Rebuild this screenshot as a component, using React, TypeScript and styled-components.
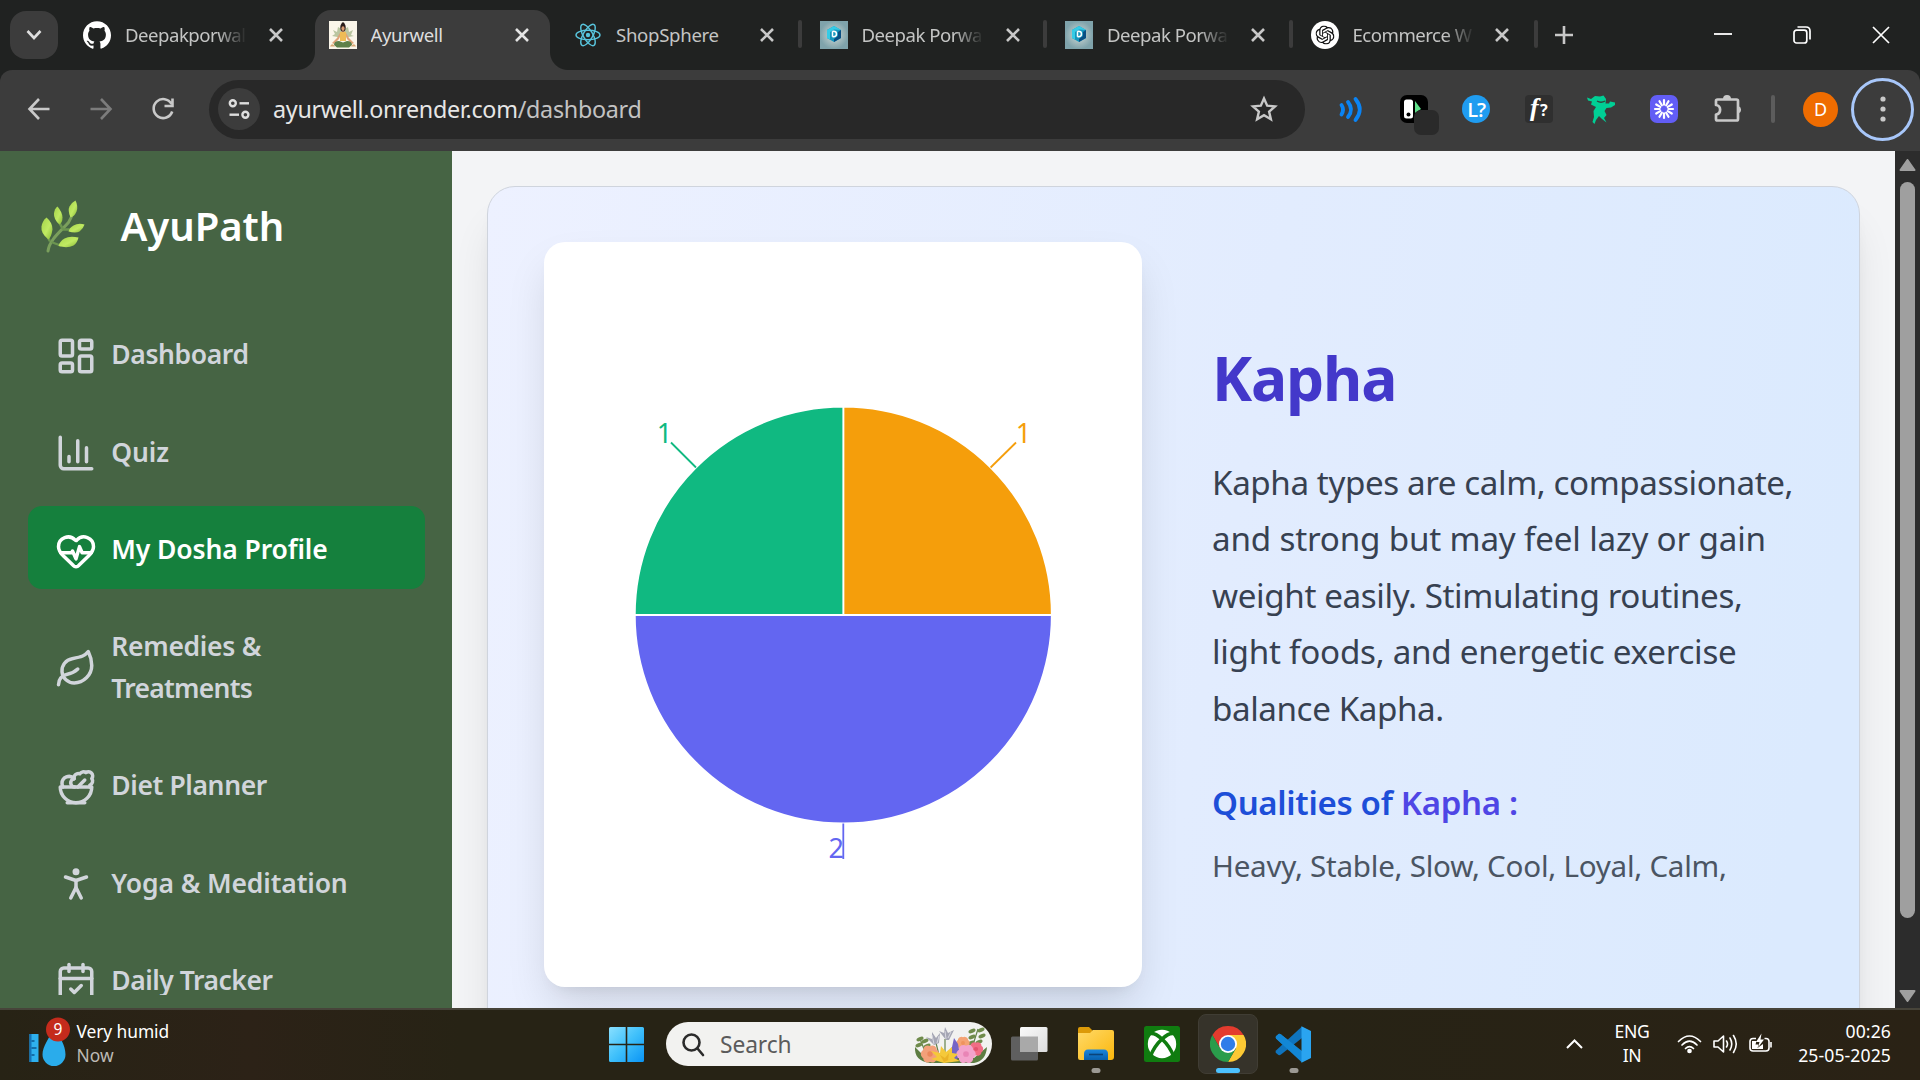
import React from "react";
import styled, { createGlobalStyle, css } from "styled-components";
import {
  Activity, LayoutDashboard, HeartPulse, Leaf, Salad, PersonStanding, CalendarCheck,
} from "lucide-react";
import { SiOpenai, SiGithub } from "react-icons/si";

const Global = createGlobalStyle`
  * { box-sizing: border-box; }
  html, body { margin: 0; padding: 0; overflow: hidden; background: #202221; }
  body { font-family: "Noto Sans", "Open Sans", sans-serif; }
  svg { display: block; flex: none; }
`;

const Screen = styled.div`
  width: 1920px;
  height: 1080px;
  display: flex;
  flex-direction: column;
  overflow: hidden;
`;

/* ---------- Tab strip ---------- */
const TabStrip = styled.div`
  height: 70px;
  flex: none;
  display: flex;
  align-items: flex-start;
  padding: 10px 0 0 10px;
  background: #202221;
`;
const TabSearch = styled.div`
  width: 48px;
  height: 48px;
  margin: 1px 11px 0 0;
  border-radius: 16px;
  background: #3c3c3c;
  display: grid;
  place-items: center;
`;
const Tab = styled.div<{ $active?: boolean }>`
  position: relative;
  width: 245.5px;
  height: 60px;
  flex: none;
  display: flex;
  align-items: center;
  padding: 0 24px 10px 14px;
  ${(p) =>
    p.$active &&
    css`
      &::before {
        content: "";
        position: absolute;
        inset: 0 10px 0 0;
        border-radius: 16px 16px 0 0;
        background: #3c3c3c;
      }
      & > svg { position: relative; }
    `}
`;
const Flare = styled.span<{ $side: "left" | "right" }>`
  position: absolute;
  bottom: 0;
  width: 18px;
  height: 18px;
  ${(p) => (p.$side === "left" ? "left: -18px;" : "right: -8px;")}
  background: radial-gradient(
    circle at ${(p) => (p.$side === "left" ? "0 0" : "100% 0")},
    transparent 17.5px,
    #3c3c3c 18.5px
  );
`;
const TabTitle = styled.span<{ $fade?: boolean; $active?: boolean; $track?: number }>`
  position: relative;
  width: 122px;
  flex: none;
  margin: 0 0 0 14px;
  overflow: hidden;
  white-space: nowrap;
  font-size: 18.6px;
  line-height: 30px;
  letter-spacing: ${(p) => p.$track ?? -0.5}px;
  color: ${(p) => (p.$active ? "#dedede" : "#c4c5c4")};
  ${(p) => p.$fade && "mask-image: linear-gradient(90deg, #000 92px, transparent 122px);"}
`;
const TabClose = styled.span`
  position: relative;
  margin-left: 22px;
  ${Tab}:nth-last-of-type(3) & { margin-left: 20px; }
`;
const TabDivider = styled.i`
  position: absolute;
  right: 4px;
  top: 10px;
  width: 4px;
  height: 28px;
  border-radius: 2px;
  background: #3c3c3c;
`;
const NewTab = styled.div`
  margin: 16px 0 0 13px;
`;
const WindowButtons = styled.div`
  margin-left: auto;
  display: flex;
  align-items: center;
  gap: 61px;
  height: 50px;
  padding-right: 30px;
`;

/* ---------- Toolbar ---------- */
const ToolbarBack = styled.div`
  flex: none;
  height: 81px;
  background: #202221;
`;
const Toolbar = styled.div`
  height: 81px;
  display: flex;
  align-items: center;
  padding: 0 6px 3px 25px;
  border-radius: 12px 12px 0 0;
  background: #3c3c3c;
`;
const NavButtons = styled.div`
  display: flex;
  gap: 34px;
  width: 184px;
`;
const Omnibox = styled.div`
  width: 1096px;
  height: 59px;
  border-radius: 30px;
  background: #282828;
  display: flex;
  align-items: center;
  padding: 0 27.5px 0 9px;
`;
const SiteInfo = styled.div`
  width: 42px;
  height: 42px;
  border-radius: 50%;
  background: #3c3c3c;
  display: grid;
  place-items: center;
`;
const Url = styled.div`
  flex: 1;
  margin-left: 13px;
  font-size: 23.3px;
  letter-spacing: -0.28px;
  line-height: 34px;
  color: #e6e6e6;
  span { color: #c3c3c3; }
`;
const Extensions = styled.div`
  display: flex;
  align-items: center;
  gap: 30.6px;
  margin-left: 30px;
`;
const ExtBox = styled.div<{ $bg?: string; $round?: string }>`
  position: relative;
  width: 32px;
  height: 32px;
  display: grid;
  place-items: center;
  & > div {
    width: 28px;
    height: 28px;
    display: grid;
    place-items: center;
    border-radius: ${(p) => p.$round ?? "7px"};
    background: ${(p) => p.$bg ?? "transparent"};
    color: #fff;
    line-height: 28px;
  }
`;
const LMark = styled.b`
  font: 600 20px/27px "Open Sans", sans-serif;
  letter-spacing: -1px;
`;
const FMark = styled.b`
  font: italic 700 26px/24px "Liberation Serif", serif;
  letter-spacing: 1.5px;
  span { font: 700 16px/24px "Noto Sans", sans-serif; letter-spacing: 0; }
`;
const ExtBadge = styled.i`
  position: absolute;
  left: 16px;
  top: 17px;
  width: 25px;
  height: 25px;
  border-radius: 7px;
  background: #2a2a2a;
`;
const ToolbarDivider = styled.i`
  width: 4px;
  height: 28px;
  border-radius: 2px;
  background: #5c5c5c;
  margin: 0 28px 0 28.5px;
`;
const Avatar = styled.div`
  width: 35px;
  height: 35px;
  border-radius: 50%;
  background: #ef6c00;
  color: #fff;
  font-size: 18px;
  line-height: 35px;
  text-align: center;
`;
const MenuRing = styled.div`
  width: 63px;
  height: 63px;
  border-radius: 50%;
  border: 3px solid #a8c7fa;
  margin-left: auto;
  display: grid;
  place-items: center;
`;

/* ---------- Web page ---------- */
const Viewport = styled.div`
  height: 857px;
  flex: none;
  display: flex;
  overflow: hidden;
  background: #f3f4f6;
`;
const Sidebar = styled.aside`
  width: 452px;
  height: 844px;
  flex: none;
  overflow: hidden;
  padding: 0 27px 0 28px;
`;
const SidebarBack = styled.div`
  width: 452px;
  height: 857px;
  flex: none;
  background: #466444;
`;
const Brand = styled.div`
  display: flex;
  align-items: center;
  height: 154px;
  padding: 0 0 5px 8px;
  gap: 28.5px;
`;
const BrandName = styled.div`
  font-size: 40px;
  font-weight: 600;
  line-height: 56px;
  letter-spacing: -0.05px;
  color: #fff;
`;
const Nav = styled.nav`
  display: flex;
  flex-direction: column;
  gap: 14.2px;
  margin-top: 6px;
`;
const NavItem = styled.div<{ $active?: boolean }>`
  display: flex;
  align-items: center;
  gap: 14px;
  min-height: 83.2px;
  padding: 20px 27px 20px 27.3px;
  border-radius: 14px;
  background: ${(p) => (p.$active ? "#15803d" : "transparent")};
  color: ${(p) => (p.$active ? "#fff" : "#d1d5db")};
  svg { position: relative; top: 3.5px; }
`;
const NavLabel = styled.span`
  font-size: 26.5px;
  font-weight: 600;
  line-height: 42.3px;
  padding-top: 2px;
  margin-bottom: -2px;
`;
const Main = styled.main`
  flex: 1;
  padding: 35px 35px 0 35px;
  overflow: hidden;
`;
const ProfileCard = styled.section`
  height: 1000px;
  border: 1px solid #cfd4dd;
  border-radius: 28px;
  background: linear-gradient(100deg, #edf1ff 0%, #e2ecfe 52%, #dbeafe 92%);
  box-shadow: 0 35px 44px -9px rgba(0, 0, 0, 0.12), 0 14px 18px -10px rgba(0, 0, 0, 0.1);
  padding: 55px 55px 55px 56px;
  display: flex;
  gap: 70px;
`;
const ChartPanel = styled.div`
  width: 598px;
  height: 745px;
  flex: none;
  border-radius: 21px;
  background: #fff;
  box-shadow: 0 22px 44px -6px rgba(0, 0, 0, 0.13), 0 9px 16px -10px rgba(0, 0, 0, 0.1);
`;
const SliceLabel = styled.text`
  font-size: 27px;
  text-anchor: middle;
`;
const Copy = styled.div`
  padding-top: 91px;
  white-space: nowrap;
`;
const DoshaName = styled.h1`
  margin: 0;
  font-size: 60.5px;
  font-weight: 700;
  line-height: 90px;
  letter-spacing: -1.2px;
  color: #4338ca;
`;
const Description = styled.p`
  margin: 31.6px 0 0;
  font-size: 33.2px;
  line-height: 56.6px;
  color: #374151;
`;
const Line = styled.span<{ $track?: number }>`
  display: block;
  letter-spacing: ${(p) => p.$track ?? 0}px;
`;
const QualitiesTitle = styled.h2`
  margin: 40.4px 0 0;
  font-size: 33px;
  font-weight: 600;
  line-height: 50px;
  letter-spacing: -0.33px;
  color: #1d4ed8;
  span { color: #4f46e5; }
`;
const QualitiesText = styled.p`
  margin: 13px 0 0;
  font-size: 29.6px;
  line-height: 50px;
  letter-spacing: -0.25px;
  color: #4b5563;
`;
const Scrollbar = styled.div`
  width: 25px;
  background: #2c2c2c;
  display: flex;
  flex-direction: column;
  align-items: center;
  padding: 8px 0 6px;
`;
const Thumb = styled.div`
  width: 15px;
  height: 736px;
  margin: 11px 0 auto;
  border-radius: 8px;
  background: #9f9f9f;
`;

/* ---------- Taskbar ---------- */
const Taskbar = styled.footer`
  flex: 1;
  display: flex;
  align-items: center;
  padding-bottom: 2px;
  border-top: 2px solid #47443a;
  background: linear-gradient(90deg, #272315 0, #2c2217 250px, #272315 460px, #272315 1300px, #2a2215);
  color: #fff;
`;
const Weather = styled.div`
  display: flex;
  width: 609px;
  padding-left: 28.5px;
  align-items: center;
  gap: 7px;
`;
const WeatherText = styled.div`
  font-size: 17.4px;
  line-height: 24px;
  letter-spacing: -0.08px;
  padding-bottom: 3px;
  span { display: block; color: #bdbab4; letter-spacing: 0; }
`;
const SearchBox = styled.div`
  width: 326px;
  height: 44px;
  margin-left: 22px;
  border-radius: 22px;
  background: #f2f2f0;
  color: #5b5b5b;
  display: flex;
  align-items: center;
  padding: 1px 4px 0 15px;
  font-size: 22.8px;
  line-height: 34px;
  letter-spacing: -0.1px;
  gap: 15px;
  svg:last-child { margin-left: auto; }
`;
const Apps = styled.div`
  display: flex;
  margin-left: 7.5px;
  gap: 6px;
`;
const TaskApp = styled.div<{ $open?: boolean; $focus?: boolean }>`
  position: relative;
  width: 60px;
  height: 60px;
  border-radius: 8px;
  display: grid;
  place-items: center;
  ${(p) => p.$focus && "background: #36332a; border: 1px solid #403d34;"}
  ${(p) =>
    (p.$open || p.$focus) &&
    css`
      &::after {
        content: "";
        position: absolute;
        bottom: ${p.$focus ? 0 : 1}px;
        left: 50%;
        transform: translateX(-50%);
        width: ${p.$focus ? 24 : 9}px;
        height: 5px;
        border-radius: 3px;
        background: ${p.$focus ? "#4cc2ff" : "#9b9993"};
      }
    `}
`;
const Tray = styled.div`
  margin-left: auto;
  display: flex;
  align-items: center;
  padding-right: 29px;
`;
const TrayText = styled.div<{ $align: string; $w: number }>`
  width: ${(p) => p.$w}px;
  padding-bottom: 1px;
  ${(p) => p.$align === "center" && "padding-left: 4px;"}
  text-align: ${(p) => p.$align};
  font-size: 17.6px;
  line-height: 23.4px;
  letter-spacing: ${(p) => (p.$align === "center" ? -0.3 : 0.1)}px;
  white-space: nowrap;
`;
const TrayIcons = styled.div`
  display: flex;
  gap: 11px;
  margin-right: 24px;
`;

/* ---------- Drawings ---------- */
const Cross = ({ s = 14, w = 2.6, c = "#c8c8c8" }: { s?: number; w?: number; c?: string }) => (
  <svg width={s} height={s} viewBox={`0 0 ${s} ${s}`}>
    <path d={`M1 1L${s - 1} ${s - 1}M${s - 1} 1L1 ${s - 1}`} stroke={c} strokeWidth={w} />
  </svg>
);

const YogaIcon = () => (
  <svg width="28" height="28" viewBox="0 0 28 28">
    <rect width="28" height="28" fill="#fbf6ea" />
    <path d="M14 17L3 15L6 13L4 9L8 11L9 6L14 9L19 6L20 11L24 9L22 14L25 15Z" fill="#b9c5a0" />
    <path d="M11.500 11Q14 9 16.500 11L20 17L25 22L23 23L18 18L17 15V20H11V15L10 18L5 23L3 22L8 17Z" fill="#dfa277" />
    <path d="M11 11H17V20H11Z" fill="#eebb55" />
    <ellipse cx="14" cy="6.500" rx="2.700" ry="4" fill="#2a1c1a" />
    <circle cx="14" cy="2.800" r="1.500" fill="#2a1c1a" />
    <ellipse cx="14" cy="7.600" rx="1.600" ry="2.300" fill="#dc9d72" />
    <path d="M5 24Q5 20 10 20L14 21.500L18 20Q23 20 23 24L20 26.500H8Z" fill="#5f8049" />
    <path d="M1 25.500Q3 21 6 25.500ZM22 25.500Q25 21 27 25.500Z" fill="#d9a773" />
  </svg>
);
const ReactIcon = () => (
  <svg width="28" height="28" viewBox="-14 -14 28 28" fill="none" stroke="#58c4dc" strokeWidth="1.400">
    <ellipse rx="12" ry="4.700" />
    <ellipse rx="12" ry="4.700" transform="rotate(60)" />
    <ellipse rx="12" ry="4.700" transform="rotate(120)" />
    <circle r="2.200" fill="#58c4dc" stroke="none" />
  </svg>
);
const HexIcon = () => (
  <svg width="28" height="28" viewBox="0 0 28 28">
    <defs>
      <radialGradient id="hexbg"><stop offset="0" stopColor="#d2dad6" /><stop offset="1" stopColor="#7fa3ab" /></radialGradient>
    </defs>
    <rect width="28" height="28" fill="url(#hexbg)" />
    <path d="M14 5L21 9V17L14 21L7 17V9Z" fill="#1496bd" />
    <path d="M14 5L7 9V17L10 18.500V11L14 8.500L21 9Z" fill="#35cbe6" />
    <path d="M21 9V17L14 21V18L18 15V11Z" fill="#0a4f83" />
    <path d="M12.500 10.300V15.700M12.500 10.300H13.500Q16.500 10.300 16.500 13Q16.500 15.700 13.500 15.700H12.500" fill="none" stroke="#fff" strokeWidth="1.500" />
    <ellipse cx="14" cy="23.500" rx="3" ry=".7" fill="#9ab3b5" />
  </svg>
);
const OpenAiIcon = () => (
  <svg width="28" height="28" viewBox="0 0 28 28">
    <circle cx="14" cy="14" r="14" fill="#fff" />
    <SiOpenai x="4.5" y="4.5" size={19} color="#111" />
  </svg>
);
const TuneIcon = () => (
  <svg width="24" height="24" viewBox="0 0 24 24" fill="none" stroke="#dedede" strokeWidth="2.400">
    <circle cx="5.800" cy="6.300" r="3" /><path d="M12.500 6.300H22" />
    <circle cx="18.400" cy="17.700" r="3" /><path d="M2.500 17.700H12" />
  </svg>
);
const Sprig = () => (
  <svg width="56" height="56" viewBox="0.500 0.500 56 56">
    <defs>
      <linearGradient id="leafg" x1="0" y1="0" x2="1" y2="1"><stop offset="0" stopColor="#a4d44a" /><stop offset=".55" stopColor="#c0ea62" /><stop offset="1" stopColor="#86b637" /></linearGradient>
    </defs>
    <g fill="none" stroke="#6c9550" strokeWidth="2.400" strokeLinecap="round">
      <path d="M12.500 53.500C14 42 26 33 33 25Q36 20 37 16" stroke="#7a9f5c" strokeWidth="3" />
      <path d="M14 43Q12 40 12 38M27 31Q25 27 23 24M28 32H36M17 45L25 48" />
    </g>
    <g fill="url(#leafg)">
      <path d="M11 20Q17 25 17 32Q16 39 13 42Q5 36 6 29Q7 23 11 20Z" />
      <path d="M22 9Q27 15 27 20Q27 25 24 27Q18 22 18.500 16Q19 11 22 9Z" />
      <path d="M40 3Q43 9 41 14Q39 19 35 20Q32 13 34 9Q36 5 40 3Z" />
      <path d="M49 27Q43 25 38 28Q34 30 33 34Q40 36 44 34Q48 31 49 27Z" />
      <path d="M43 40Q34 38 29 41Q24 44 23 48.500Q32 51 38 48Q42 45 43 40Z" />
    </g>
  </svg>
);

const Swoosh = () => (
  <svg width="32" height="32" viewBox="0 0 32 32" fill="none" stroke="#0a84f5" strokeWidth="3.800" strokeLinecap="round">
    <path d="M6.500 12Q9.500 16.500 6.500 21.500M13 9Q19 16.500 13 24M20.500 6Q29 16.500 20.500 27" />
  </svg>
);
const Wombat = () => (
  <svg width="32" height="32" viewBox="0 0 32 32" fill="#00cf95">
    <path d="M2 4.500L6 6L10 3L15 3.500L18.500 2.500L21 6L20.500 10.500L24 10.500L25 8.500L30 9.500V12L26 14.500L21.500 15L19.500 18L21.500 22L19 25L21.500 29.500L17 26L14 23L11 27L9.500 31L7.500 29L9 24L8.500 18L11 14L6 11.500L7 8.500L3 7.500Z" />
    <path d="M12 8Q16 10.500 20 8" stroke="#30463c" strokeWidth="1.300" fill="none" />
  </svg>
);
const Burst = () => (
  <svg width="22" height="22" viewBox="-11 -11 22 22" stroke="#fff" strokeWidth="2.200" strokeLinecap="round">
    {Array.from({ length: 12 }, (_, i) => (
      <path key={i} d="M0 -4.300V-9" transform={`rotate(${i * 30})`} />
    ))}
  </svg>
);
const Puzzle = () => (
  <svg width="32" height="32" viewBox="0 0 32 32" fill="none" stroke="#c9c9c9" strokeWidth="2.700" strokeLinejoin="round">
    <path d="M5 12V8Q5 6.500 6.500 6.500H25.500Q27 6.500 27 8V26Q27 27.500 25.500 27.500H6.500Q5 27.500 5 26V21.500A4.800 4.800 0 0 0 5 12Z" />
    <path d="M12 6A4 4 0 0 1 20 6ZM27.500 13A4 4 0 0 1 27.500 20.500Z" fill="#c9c9c9" stroke="none" />
  </svg>
);

const Pie = () => (
  <svg width="598" height="745" viewBox="0 0 598 745">
    <g stroke="#fff" strokeWidth="1.800">
      <path d="M299.300 373V164.500A208.500 208.500 0 0 1 507.800 373Z" fill="#f59e0b" />
      <path d="M299.300 373H90.800A208.500 208.500 0 0 1 299.300 164.500Z" fill="#10b981" />
      <path d="M299.300 373H507.800A208.500 208.500 0 0 1 90.800 373Z" fill="#6366f1" />
    </g>
    <g fill="none" strokeWidth="1.800">
      <path d="M152 225.500L127 200.500" stroke="#10b981" />
      <path d="M446.600 225.500L472 200.500" stroke="#f59e0b" />
      <path d="M299.300 581.500V617" stroke="#6366f1" />
    </g>
    <SliceLabel x="120.500" y="201" fill="#10b981">1</SliceLabel>
    <SliceLabel x="479.500" y="201" fill="#f59e0b">1</SliceLabel>
    <SliceLabel x="292.300" y="616" fill="#6366f1">2</SliceLabel>
  </svg>
);

const WeatherIcon = () => (
  <svg width="41" height="56" viewBox="0.500 0.500 41 56">
    <rect x="1" y="18.500" width="9" height="28" fill="#2eb0ee" />
    <rect x="1" y="18.500" width="2" height="28" fill="#1473b8" />
    <path d="M3 25.500H6M3 32.500H8M3 39.500H6" stroke="#0c5793" strokeWidth="1.600" />
    <path d="M26 12C31 22 37 29 37 39A11.500 11.500 0 0 1 14 39C14 31 21 22 26 12Z" fill="#2aaceb" />
    <circle cx="29.500" cy="14" r="12" fill="#c42b1c" />
    <text x="29.500" y="19.500" fontSize="15.500" textAnchor="middle" fill="#fff">9</text>
  </svg>
);
const WindowsLogo = () => (
  <svg width="35" height="35" viewBox="0 0 35 35">
    <defs><linearGradient id="win" x1="0" y1="0" x2="1" y2="1"><stop offset="0" stopColor="#8ae0ff" /><stop offset=".5" stopColor="#3fc0fb" /><stop offset="1" stopColor="#0a94f5" /></linearGradient></defs>
    <path d="M1.500 0H16.700V16.700H0V1.500Q0 0 1.500 0ZM18.300 0H33.500Q35 0 35 1.500V16.700H18.300ZM0 18.300H16.700V35H1.500Q0 35 0 33.500ZM18.300 18.300H35V33.500Q35 35 33.500 35H18.300Z" fill="url(#win)" />
  </svg>
);
const Lens = () => (
  <svg width="24" height="24" viewBox="0 0 24 24" fill="none" stroke="#2b2b2b" strokeWidth="2.600" strokeLinecap="round">
    <circle cx="10.500" cy="9.500" r="8" /><path d="M16.500 15.500L22 22" />
  </svg>
);
const Bloom = ({ x, y, r, c, d }: { x: number; y: number; r: number; c: string; d: string }) => (
  <g transform={`translate(${x} ${y})`}>
    {[0, 60, 120, 180, 240, 300].map((a) => (
      <ellipse key={a} cx={r * 0.5} rx={r * 0.52} ry={r * 0.5} fill={c} transform={`rotate(${a})`} />
    ))}
    <circle r={r * 0.3} fill={d} opacity=".5" />
  </g>
);
const Flowers = () => (
  <svg width="74" height="40" viewBox="0 0 74 40">
    <g stroke="#64834c" strokeWidth="1.200" fill="none">
      <path d="M14 34L6 14M57 26L64 4M26 34L22 18M31 34V14" />
    </g>
    <g fill="#6f8b4b">
      {[[6, 14], [11, 16], [5, 20], [13, 21], [58, 6], [67, 5], [58, 12], [68, 11], [57, 18], [65, 17]].map(([x, y]) => (
        <ellipse key={`${x}-${y}`} cx={x} cy={y} rx="3.800" ry="1.800" transform={`rotate(-25 ${x} ${y})`} />
      ))}
    </g>
    <path d="M1 22Q0 36 16 38H60Q72 36 73 22L60 33H12Z" fill="#5d7d42" />
    <path d="M20 20L12 12L18 14L18 7L22 13L26 8L25 18ZM32 15L25 6L30 8L31 2L34 8L40 5L35 15Z" fill="#a5a6b4" />
    <path d="M20 19L18 10M32 14L31 6M23 18L25 11M34 13L37 7" stroke="#d9d9e2" strokeWidth="1" />
    <Bloom x={49} y={18} r={6.5} c="#f5a374" d="#ea8348" />
    <Bloom x={62} y={24} r={7} c="#f26d85" d="#d63a59" />
    <path d="M40 13L44 19L46 30L42 35L37 31L35 26L38 22Z" fill="#7565c6" />
    <Bloom x={16} y={29} r={9} c="#f3a07a" d="#e4703f" />
    <Bloom x={52} y={29} r={9.5} c="#f3a3cc" d="#e0679f" />
    <path d="M30 38L17 34L23 32L17 26L26 28L27 21L32 27L38 22L38 28L44 29L40 33L46 36Z" fill="#f5c93a" />
    <path d="M30 37L26 30L31 33L35 28L34 35L39 33Z" fill="#e09d16" opacity=".5" />
  </svg>
);
const TaskView = () => (
  <svg width="37" height="36" viewBox="0 0 37 36">
    <defs><linearGradient id="tv" x1="0" y1="0" x2="1" y2="1"><stop offset="0" stopColor="#fafafa" /><stop offset="1" stopColor="#dcdcdc" /></linearGradient></defs>
    <rect x="0" y="10.500" width="27" height="24" rx="1.500" fill="#5f5f5f" />
    <rect x="9" y="1" width="27.500" height="25" rx="1.500" fill="url(#tv)" />
    <rect x="9" y="10.500" width="18" height="15.500" fill="#a9a9a9" />
  </svg>
);
const Folder = () => (
  <svg width="36" height="36" viewBox="0 0 36 36">
    <defs>
      <linearGradient id="fold" x1="0" y1="0" x2="1" y2="1"><stop offset="0" stopColor="#ffd968" /><stop offset="1" stopColor="#fbb70c" /></linearGradient>
      <linearGradient id="tray" x1="0" y1="0" x2="0" y2="1"><stop offset="0" stopColor="#1a86dd" /><stop offset="1" stopColor="#0860ad" /></linearGradient>
    </defs>
    <path d="M0 3Q0 1 2 1H11L15 5V12H0Z" fill="#dc9a08" />
    <path d="M0 7H12L15 4H34Q36 4 36 6V31Q36 34 33 34H2Q0 34 0 32Z" fill="url(#fold)" />
    <path d="M6 34V28Q6 23.500 10 23.500H26Q30 23.500 30 28V34Z" fill="url(#tray)" />
    <path d="M11 28.500H25" stroke="#0a4379" strokeWidth="1.600" />
  </svg>
);
const Xbox = () => (
  <svg width="36" height="36" viewBox="0 0 36 36">
    <rect width="36" height="36" rx="2.500" fill="#107c10" />
    <circle cx="18" cy="18" r="14.200" fill="#fff" />
    <g fill="none" stroke="#107c10" strokeWidth="3.600">
      <path d="M6 7.500Q11 6.500 18 13Q26.500 21 29.500 30.500" />
      <path d="M30 7.500Q25 6.500 18 13Q9.500 21 6.500 30.500" />
    </g>
  </svg>
);
const Chrome = () => (
  <svg width="36" height="36" viewBox="-18 -18 36 36">
    <path d="M-15.590 -9A18 18 0 0 1 15.590 -9H0L-7.800 4.500Z" fill="#e33b2e" />
    <path d="M15.590 -9A18 18 0 0 1 0 18L7.800 4.500L0 -9Z" fill="#fcc934" />
    <path d="M0 18A18 18 0 0 1 -15.590 -9L-7.800 4.500L0 9L7.800 4.500Z" fill="#2a9c4b" />
    <circle r="9" fill="#fff" /><circle r="7.200" fill="#2f7de9" />
  </svg>
);
const VsCode = () => (
  <svg width="37" height="37" viewBox="0 0 37 37">
    <path d="M27 36.500L1 12.500Q0 11 1 10L3.500 8Q4.500 7.500 6 8.500L27 25Z" fill="#1287d6" />
    <path d="M27 0.500L1 24.500Q0 26 1 27L3.500 29Q4.500 29.500 6 28.500L27 12Z" fill="#0f74be" />
    <path d="M1 12.500L3.500 8Q4.500 7.500 6 8.500L20 19.500L14 24.500Z" fill="#1287d6" />
    <path d="M26.500 .3L36 5V32L26.500 36.700Z" fill="#2aa4f0" />
  </svg>
);
const Wifi = () => (
  <svg width="25" height="22" viewBox="0 0 25 22" fill="none" stroke="#fff" strokeWidth="1.700" strokeLinecap="round">
    <path d="M1.500 8.500Q12.500 -2.500 23.500 8.500M5 12Q12.500 4.500 20 12M8.500 15.500Q12.500 11.500 16.500 15.500" />
    <circle cx="12.500" cy="18" r="1.500" fill="#fff" />
  </svg>
);
const Speaker = () => (
  <svg width="25" height="22" viewBox="0 0 25 22" fill="none" stroke="#fff" strokeWidth="1.600" strokeLinecap="round" strokeLinejoin="round">
    <path d="M1 8H5L10.500 3V19L5 14H1ZM13.500 8Q15.500 11 13.500 14M17 5Q20.500 11 17 17M20.500 2.500Q26 11 20.500 19.500" />
  </svg>
);
const Battery = () => (
  <svg width="24" height="22" viewBox="0 0 24 22" fill="none" stroke="#fff" strokeWidth="1.600">
    <path d="M7 5.500H4Q1 5.500 1 8.500V15Q1 18 4 18H17Q20 18 20 15V8.500Q20 5.500 17 5.500H15.500M22 9V14.500" />
    <path d="M3 8H7.500L6.500 11.500H9.500L8.500 15L14 11V16H3Z" fill="#fff" stroke="none" />
    <path d="M12.500 .500L7 9H10.500L9 14.500L15 6.500H11.500Z" fill="#fff" stroke="none" />
  </svg>
);
const QuizIcon = () => (
  <svg width="42" height="42" viewBox="0 0 24 24" fill="none" stroke="currentColor" strokeWidth="2" strokeLinecap="round" strokeLinejoin="round">
    <path d="M3 3v16a2 2 0 0 0 2 2h16M18 17V9M13 17V5M8 17v-3" />
  </svg>
);

const tabs = [
  { icon: <SiGithub size={28} color="#fff" />, title: "Deepakporwal", fade: true },
  { icon: <YogaIcon />, title: "Ayurwell", active: true, track: -0.4 },
  { icon: <ReactIcon />, title: "ShopSphere", divider: true, track: -0.3 },
  { icon: <HexIcon />, title: "Deepak Porwal", fade: true, divider: true },
  { icon: <HexIcon />, title: "Deepak Porwal", fade: true, divider: true },
  { icon: <OpenAiIcon />, title: "Ecommerce W", fade: true, divider: true },
];

const navItems: { Icon?: typeof Activity; lines: [string, number][]; active?: boolean }[] = [
  { Icon: LayoutDashboard, lines: [["Dashboard", -0.4]] },
  { lines: [["Quiz", -0.1]] },
  { Icon: HeartPulse, lines: [["My Dosha Profile", -0.11]], active: true },
  { Icon: Leaf, lines: [["Remedies &", -0.3], ["Treatments", -0.75]] },
  { Icon: Salad, lines: [["Diet Planner", -0.38]] },
  { Icon: PersonStanding, lines: [["Yoga & Meditation", -0.13]] },
  { Icon: CalendarCheck, lines: [["Daily Tracker", -0.48]] },
];

const description: [string, number][] = [
  ["Kapha types are calm, compassionate,", -0.41],
  ["and strong but may feel lazy or gain", -0.18],
  ["weight easily. Stimulating routines,", -0.38],
  ["light foods, and energetic exercise", -0.26],
  ["balance Kapha.", -0.42],
];

export default function App() {
  return (
    <Screen>
      <Global />
      <TabStrip>
        <TabSearch>
          <svg width="16" height="12" viewBox="0 0 16 12" fill="none" stroke="#dedede" strokeWidth="2.600">
            <path d="M1.500 2L8 9L14.500 2" />
          </svg>
        </TabSearch>
        {tabs.map((t, i) => (
          <Tab key={i} $active={t.active}>
            {t.active && <><Flare $side="left" /><Flare $side="right" /></>}
            {t.icon}
            <TabTitle $fade={t.fade} $active={t.active} $track={t.track}>{t.title}</TabTitle>
            <TabClose><Cross c={t.active ? "#e3e3e3" : "#c8c8c8"} /></TabClose>
            {t.divider && <TabDivider />}
          </Tab>
        ))}
        <NewTab>
          <svg width="18" height="18" viewBox="0 0 18 18"><path d="M9 0V18M0 9H18" stroke="#c8c8c8" strokeWidth="2.600" /></svg>
        </NewTab>
        <WindowButtons>
          <svg width="18" height="18" viewBox="0 0 18 18"><path d="M0 8H18" stroke="#fff" strokeWidth="1.800" /></svg>
          <svg width="18" height="18" viewBox="0 0 18 18" fill="none" stroke="#fff" strokeWidth="1.700">
            <rect x="1" y="4.200" width="12.800" height="12.800" rx="2.500" />
            <path d="M4.500 1H13Q17 1 17 5V13.500" />
          </svg>
          <Cross s={18} w={1.7} c="#fff" />
        </WindowButtons>
      </TabStrip>

      <ToolbarBack>
        <Toolbar>
          <NavButtons>
            <svg width="28" height="28" viewBox="0 0 28 28" fill="none" stroke="#c9c9c9" strokeWidth="2.600"><path d="M24.500 14H5M14 4L4.500 14L14 24" /></svg>
            <svg width="28" height="28" viewBox="0 0 28 28" fill="none" stroke="#7c7c7c" strokeWidth="2.600"><path d="M3.500 14H23M14 4L23.500 14L14 24" /></svg>
            <svg width="28" height="28" viewBox="0 0 28 28" fill="none" stroke="#c9c9c9" strokeWidth="2.600">
              <path d="M22.500 9A9.500 9.500 0 1 0 23.200 16.500M23.500 3.500V11H15.500" />
            </svg>
          </NavButtons>
          <Omnibox>
            <SiteInfo><TuneIcon /></SiteInfo>
            <Url>ayurwell.onrender.com<span>/dashboard</span></Url>
            <svg width="28" height="28" viewBox="0 0 28 28" fill="none" stroke="#c9c9c9" strokeWidth="2.400">
              <path d="M14 3.500L17.200 10.700L25 11.400L19.100 16.600L20.900 24.300L14 20.200L7.100 24.300L8.900 16.600L3 11.400L10.800 10.700Z" />
            </svg>
          </Omnibox>
          <Extensions>
            <Swoosh />
            <ExtBox $bg="#000">
              <div>
                <svg width="28" height="28" viewBox="0 0 28 28">
                  <rect x="4" y="4.500" width="9" height="19" rx="2.500" fill="#fff" />
                  <circle cx="8.500" cy="19.500" r="2" fill="#000" />
                  <path d="M15 6L21 14L15 18Z" fill="#5fe08a" />
                </svg>
              </div>
              <ExtBadge />
            </ExtBox>
            <ExtBox $bg="#1f9cf0" $round="50%"><div><LMark>L?</LMark></div></ExtBox>
            <ExtBox $bg="#2f2f2f" $round="4px"><div><FMark>f<span>?</span></FMark></div></ExtBox>
            <Wombat />
            <ExtBox $bg="#625df5"><div><Burst /></div></ExtBox>
            <Puzzle />
          </Extensions>
          <ToolbarDivider />
          <Avatar>D</Avatar>
          <MenuRing>
            <svg width="6" height="30" viewBox="0 0 6 30" fill="#c9c9c9"><circle cx="3" cy="5" r="2.600" /><circle cx="3" cy="15" r="2.600" /><circle cx="3" cy="25" r="2.600" /></svg>
          </MenuRing>
        </Toolbar>
      </ToolbarBack>

      <Viewport>
        <SidebarBack>
          <Sidebar>
            <Brand>
              <Sprig />
              <BrandName>AyuPath</BrandName>
            </Brand>
            <Nav>
              {navItems.map(({ Icon, lines, active }) => (
                <NavItem key={lines[0][0]} $active={active}>
                  {Icon ? <Icon size={42} strokeWidth={2} /> : <QuizIcon />}
                  <NavLabel>
                    {lines.map(([text, track]) => <Line key={text} $track={track}>{text}</Line>)}
                  </NavLabel>
                </NavItem>
              ))}
            </Nav>
          </Sidebar>
        </SidebarBack>
        <Main>
          <ProfileCard>
            <ChartPanel><Pie /></ChartPanel>
            <Copy>
              <DoshaName>Kapha</DoshaName>
              <Description>
                {description.map(([text, track]) => <Line key={text} $track={track}>{text}</Line>)}
              </Description>
              <QualitiesTitle>Qualities of <span>Kapha :</span></QualitiesTitle>
              <QualitiesText>Heavy, Stable, Slow, Cool, Loyal, Calm,</QualitiesText>
            </Copy>
          </ProfileCard>
        </Main>
        <Scrollbar>
          <svg width="17" height="12" viewBox="0 0 17 12"><path d="M8.500 1L15.500 11H1.500Z" fill="#9f9f9f" stroke="#9f9f9f" strokeWidth="2" strokeLinejoin="round" /></svg>
          <Thumb />
          <svg width="17" height="12" viewBox="0 0 17 12"><path d="M8.500 11L15.500 1H1.500Z" fill="#9f9f9f" stroke="#9f9f9f" strokeWidth="2" strokeLinejoin="round" /></svg>
        </Scrollbar>
      </Viewport>

      <Taskbar>
        <Weather>
          <WeatherIcon />
          <WeatherText>Very humid<span>Now</span></WeatherText>
        </Weather>
        <WindowsLogo />
        <SearchBox><Lens />Search<Flowers /></SearchBox>
        <Apps>
          <TaskApp><TaskView /></TaskApp>
          <TaskApp $open><Folder /></TaskApp>
          <TaskApp><Xbox /></TaskApp>
          <TaskApp $focus><Chrome /></TaskApp>
          <TaskApp $open><VsCode /></TaskApp>
        </Apps>
        <Tray>
          <svg width="17" height="10" viewBox="0 0 17 10" fill="none" stroke="#fff" strokeWidth="2"><path d="M1 9L8.500 1.500L16 9" /></svg>
          <TrayText $align="center" $w={94}>ENG<br />IN</TrayText>
          <TrayIcons><Wifi /><Speaker /><Battery /></TrayIcons>
          <TrayText $align="right" $w={94}>00:26<br />25-05-2025</TrayText>
        </Tray>
      </Taskbar>
    </Screen>
  );
}
